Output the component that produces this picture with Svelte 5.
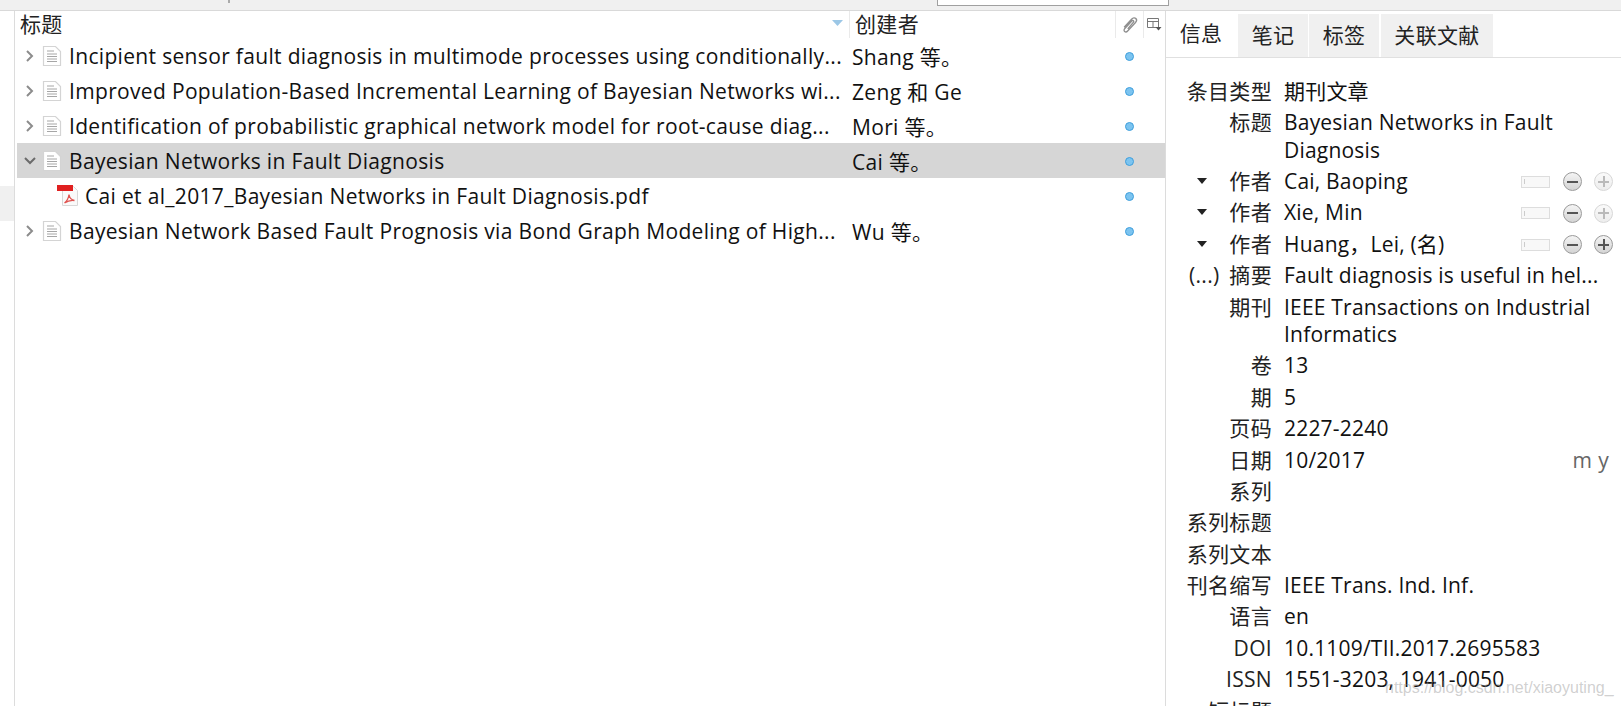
<script>
  const items = [
    { title: 'Incipient sensor fault diagnosis in multimode processes using conditionally...', creator: 'Shang 等。' },
    { title: 'Improved Population-Based Incremental Learning of Bayesian Networks wi...', creator: 'Zeng 和 Ge' },
    { title: 'Identification of probabilistic graphical network model for root-cause diag...', creator: 'Mori 等。' },
    { title: 'Bayesian Networks in Fault Diagnosis', creator: 'Cai 等。', open: true, selected: true },
    { title: 'Cai et al_2017_Bayesian Networks in Fault Diagnosis.pdf', creator: '', pdf: true },
    { title: 'Bayesian Network Based Fault Prognosis via Bond Graph Modeling of High...', creator: 'Wu 等。' }
  ];

  const tabs = [
    { label: '信息', active: true },
    { label: '笔记' },
    { label: '标签' },
    { label: '关联文献', wide: true }
  ];

  const fields = [
    { label: '条目类型', value: '期刊文章' },
    { label: '标题', value: 'Bayesian Networks in Fault Diagnosis' },
    { label: '作者', value: 'Cai, Baoping', author: true },
    { label: '作者', value: 'Xie, Min', author: true },
    { label: '作者', value: 'Huang\uFF0CLei, (名)', author: true, last: true },
    { label: '摘要', value: 'Fault diagnosis is useful in hel...', abstract: true },
    { label: '期刊', value: 'IEEE Transactions on Industrial Informatics' },
    { label: '卷', value: '13' },
    { label: '期', value: '5' },
    { label: '页码', value: '2227-2240' },
    { label: '日期', value: '10/2017', date: 'm y' },
    { label: '系列', value: '' },
    { label: '系列标题', value: '' },
    { label: '系列文本', value: '' },
    { label: '刊名缩写', value: 'IEEE Trans. Ind. Inf.' },
    { label: '语言', value: 'en' },
    { label: 'DOI', value: '10.1109/TII.2017.2695583' },
    { label: 'ISSN', value: '1551-3203, 1941-0050' },
    { label: '短标题', value: '' }
  ];
</script>

<div class="window">
  <div class="toolbar">
    <span class="tick"></span>
    <div class="search"></div>
  </div>

  <div class="main">
    <div class="sidebar">
      <div class="side-selected"></div>
    </div>

    <div class="list">
      <div class="list-head">
        <div class="head-cell title-head">
          <span>标题</span>
          <svg class="sort" width="11" height="6" viewBox="0 0 11 6"><path d="M0 0h11L5.500 6z" fill="#9cc7e6" /></svg>
        </div>
        <div class="head-cell creator-head">创建者</div>
        <div class="head-cell clip-head">
          <svg width="18" height="18" viewBox="0 0 16 16" fill="none" stroke="#8f8f8f" stroke-width="1.200">
            <path d="M2.800 10l6.800-7.300c1.100-1.200 2.700-1.300 3.600-.4s.8 2.300-.3 3.500l-7 7.500c-.8.900-2 1-2.700.4s-.6-1.700.2-2.600l6.200-6.700c.5-.5 1.100-.6 1.500-.2s.3 1-.2 1.500L6 11.500" />
          </svg>
        </div>
        <div class="head-cell picker-head">
          <svg width="15" height="14" viewBox="0 0 15 14">
            <path d="M.5.5h11v9h-11zM.5 3.500h11M6 3.500v6" fill="none" stroke="#777" />
            <path d="M8.500 9h6l-3 3.500z" fill="#555" />
          </svg>
        </div>
      </div>

      {#each items as item}
        <div class="row" class:selected={item.selected}>
          <div class="title-cell" class:child={item.pdf}>
            {#if item.pdf}
              <svg class="pdf" width="22" height="21" viewBox="0 0 22 21">
                <path d="M5.500 1.500h11l4 4v15h-15z" fill="#fafafa" stroke="#d8d8d8" />
                <rect x="0" y="0" width="16" height="6" fill="#e02020" />
                <path d="M7.500 18c2-1.500 4-5 4.500-8.500.5 3 2.500 5.500 5.500 6-3-.5-7 .5-10 2.500z" fill="none" stroke="#e0524f" stroke-width="1.300" />
              </svg>
            {:else}
              <svg class="twisty" width="12" height="14" viewBox="0 0 12 14" fill="none" stroke="#8c8c8c" stroke-width="2">
                {#if item.open}
                  <path d="M1 4l5 5 5-5" stroke="#6b6b6b" />
                {:else}
                  <path d="M3 2l5 5-5 5" />
                {/if}
              </svg>
              <svg class="doc" width="20" height="22" viewBox="0 0 20 22">
                <path d="M1.500 1.500h12l5 5v14h-17z" fill="#fff" stroke="#d4d4d4" stroke-width="1.200" />
                <path d="M5 6h7M5 9h10M5 11.500h10M5 14h10M5 16.500h10" stroke="#a6a6a6" />
              </svg>
            {/if}
            <span class="title-text">{item.title}</span>
          </div>
          <div class="creator-cell">{item.creator}</div>
          <div class="dot-cell"><span class="dot"></span></div>
        </div>
      {/each}
    </div>

    <div class="pane">
      <div class="tabs">
        {#each tabs as tab}
          <div class="tab" class:active={tab.active} class:wide={tab.wide}>{tab.label}</div>
        {/each}
      </div>

      <div class="fields">
        {#each fields as f}
          <div class="field">
            <div class="label">
              {#if f.author}
                <svg class="caret" width="10" height="6" viewBox="0 0 10 6"><path d="M0 0h10L5 6z" fill="#222" /></svg>
              {/if}
              {#if f.abstract}
                <span class="more">(...)</span>
              {/if}
              <span>{f.label}</span>
            </div>
            <div class="value">
              <span class="value-text" class:single={f.abstract}>{f.value}</span>
              {#if f.date}
                <span class="date-order">{f.date}</span>
              {/if}
              {#if f.author}
                <div class="author-tools">
                  <span class="switch"><i></i></span>
                  <span class="round"><b class="minus"></b></span>
                  <span class="round" class:faded={!f.last}><b class="minus"></b><b class="plus"></b></span>
                </div>
              {/if}
            </div>
          </div>
        {/each}
      </div>
    </div>
  </div>

  <div class="watermark">https://blog.csdn.net/xiaoyuting_</div>
</div>

<style>
  :global(body) {
    margin: 0;
    overflow: hidden;
  }

  .window {
    position: relative;
    width: 1621px;
    height: 706px;
    overflow: hidden;
    background: #fff;
    color: #111;
    font-family: "Open Sans", "Noto Sans CJK SC", sans-serif;
    font-size: 21px;
    letter-spacing: 0.33px;
    display: flex;
    flex-direction: column;
  }

  .toolbar {
    height: 10px;
    flex: none;
    background: #f0f0f0;
    border-bottom: 1px solid #d9d9d9;
    display: flex;
  }

  .tick {
    width: 2px;
    height: 3px;
    margin-left: 228px;
    background: #aaa;
  }

  .search {
    width: 230px;
    height: 5px;
    margin-left: 707px;
    background: #fff;
    border: 1px solid #a0a0a0;
    border-top: none;
  }

  .main {
    flex: 1;
    display: flex;
    min-height: 0;
  }

  .sidebar {
    width: 14px;
    flex: none;
    background: #fff;
    border-right: 1px solid #dcdcdc;
    padding-top: 175px;
  }

  .side-selected {
    height: 35px;
    background: #f0f0f0;
  }

  .list {
    width: 1150px;
    flex: none;
    padding-left: 2px;
    box-sizing: border-box;
  }

  .list-head {
    height: 27px;
    display: flex;
  }

  .head-cell {
    display: flex;
    align-items: center;
    border-right: 1px solid #eaeaea;
    box-sizing: border-box;
    line-height: 27px;
    color: #222;
  }

  .title-head {
    width: 833px;
    padding-left: 3px;
    justify-content: space-between;
    padding-right: 6px;
  }

  .sort {
    margin-top: -3px;
  }

  .creator-head {
    width: 266px;
    padding-left: 5px;
  }

  .clip-head {
    width: 28px;
    justify-content: center;
  }

  .picker-head {
    width: 21px;
    justify-content: center;
    border-right: none;
  }

  .row {
    height: 35px;
    display: flex;
    align-items: center;
  }

  .row.selected {
    background: #d6d6d6;
  }

  .title-cell {
    width: 833px;
    flex: none;
    display: flex;
    align-items: center;
    white-space: nowrap;
    padding-left: 7px;
    box-sizing: border-box;
  }

  .title-cell.child {
    padding-left: 40px;
  }

  .twisty {
    margin-right: 6px;
  }

  .doc {
    margin-right: 7px;
  }

  .pdf {
    margin-right: 6px;
  }

  .creator-cell {
    width: 266px;
    flex: none;
    padding-left: 2px;
    box-sizing: border-box;
    white-space: nowrap;
  }

  .dot-cell {
    width: 26px;
    display: flex;
    justify-content: center;
    padding-top: 1px;
  }

  .dot {
    width: 9px;
    height: 9px;
    border-radius: 50%;
    background: #7cc4f0;
    border: 1.500px solid #3f9fdc;
    box-sizing: border-box;
  }

  .pane {
    flex: 1;
    min-width: 0;
    border-left: 1px solid #dcdcdc;
  }

  .tabs {
    height: 47px;
    box-sizing: border-box;
    padding: 3px 0 0 1px;
    display: flex;
    border-bottom: 1px solid #e0e0e0;
  }

  .tab {
    width: 70px;
    margin-right: 1px;
    background: #f0f0f0;
    text-align: center;
    line-height: 42px;
    color: #222;
  }

  .tab.wide {
    width: 112px;
    margin-left: 1px;
  }

  .tab.active {
    background: #fff;
    line-height: 39px;
    box-sizing: border-box;
    padding-right: 2px;
  }

  .fields {
    padding-top: 20px;
  }

  .field {
    display: grid;
    grid-template-columns: 106px 1fr;
    column-gap: 12px;
    margin-bottom: 4.100px;
    line-height: 27.300px;
  }

  .label {
    position: relative;
    text-align: right;
    white-space: nowrap;
    color: #222;
    min-height: 27.300px;
  }

  .caret {
    position: absolute;
    left: 31px;
    top: 10px;
  }

  .more {
    margin-right: 4px;
  }

  .value {
    position: relative;
    display: flex;
    justify-content: space-between;
    padding-right: 12px;
    min-width: 0;
    letter-spacing: 0.2px;
  }

  .value-text {
    max-width: 315px;
  }

  .value-text.single {
    max-width: none;
    white-space: nowrap;
  }

  .date-order {
    color: #666;
    letter-spacing: 0.33px;
  }

  .author-tools {
    display: flex;
    align-items: center;
    gap: 12px;
    margin-right: -4px;
  }

  .switch {
    width: 27px;
    height: 10px;
    background: #f8f8f8;
    border: 1px solid #ddd;
    display: flex;
    align-items: center;
    margin-right: 1px;
  }

  .switch i {
    width: 1px;
    height: 5px;
    margin-left: 2px;
    background: #ccc;
  }

  .round {
    position: relative;
    width: 17px;
    height: 17px;
    border-radius: 50%;
    border: 1.500px solid #9a9a9a;
    background: linear-gradient(#f4f4f4, #d4d4d4);
  }

  .round.faded {
    opacity: 0.4;
  }

  .minus {
    position: absolute;
    left: 3px;
    right: 3px;
    top: 50%;
    height: 2px;
    margin-top: -1px;
    background: #555;
  }

  .plus {
    position: absolute;
    top: 3px;
    bottom: 3px;
    left: 50%;
    width: 2px;
    margin-left: -1px;
    background: #555;
  }

  .watermark {
    position: absolute;
    left: 1385px;
    top: 679px;
    font-family: "Liberation Sans", sans-serif;
    font-size: 16px;
    letter-spacing: 0;
    color: rgba(150, 150, 150, 0.45);
    white-space: nowrap;
  }
</style>
